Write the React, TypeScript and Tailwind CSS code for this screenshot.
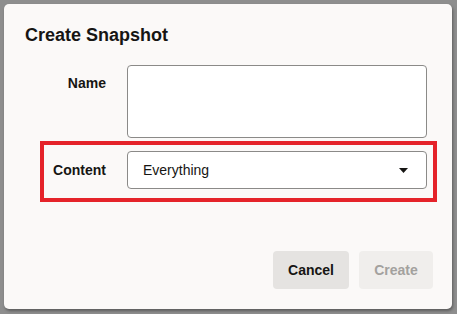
export default function App() {
  return (
    <div className="w-[457px] h-[314px] bg-[#8e8e8e] pt-[4px] pl-[4px] font-['Liberation_Sans',Arial,sans-serif]">
      <div className="w-[448px] h-[305px] bg-[#fbf9f8] rounded-[5px] shadow-[1px_2px_3px_rgba(0,0,0,0.35)] flex flex-col pt-[21px]">
        <h2 className="pl-[21px] text-[18px] leading-5 font-bold text-[#161513]">Create Snapshot</h2>

        {/* name */}
        <div className="mt-[16px] ml-[36px] w-[397px] border-x-4 border-t-4 border-transparent flex">
          <label className="w-[62px] pt-[8px] text-right text-[14px] leading-5 font-bold text-[#161513]">Name</label>
          <textarea className="ml-[21px] w-[300px] h-[73px] bg-white border border-[#8b8a88] rounded-[4px] resize-none outline-none" />
        </div>

        {/* content, highlighted */}
        <div className="mt-[3px] ml-[36px] w-[397px] border-4 border-[#e5232a] pt-[6px] pb-[9px] flex items-center">
          <span className="w-[62px] text-right text-[14px] leading-5 font-bold text-[#161513]">Content</span>
          <div className="ml-[21px] w-[300px] h-[38px] bg-white border border-[#8b8a88] rounded-[4px] flex items-center justify-between pl-[15px] pr-[18px]">
            <span className="text-[14px] text-[#161513]">Everything</span>
            <svg width="9" height="5" viewBox="0 0 9 5">
              <path d="M0 0H9L4.5 5Z" fill="#161513" />
            </svg>
          </div>
        </div>

        <div className="mt-[49px] pr-[19px] flex justify-end gap-[10px]">
          <button className="w-[76px] h-[38px] rounded-[4px] bg-[#e5e3e1] text-[14px] font-bold text-[#161513]">Cancel</button>
          <button className="w-[74px] h-[38px] rounded-[4px] bg-[#f0eeec] text-[14px] font-bold text-[#a3a19e]">Create</button>
        </div>
      </div>
    </div>
  );
}
